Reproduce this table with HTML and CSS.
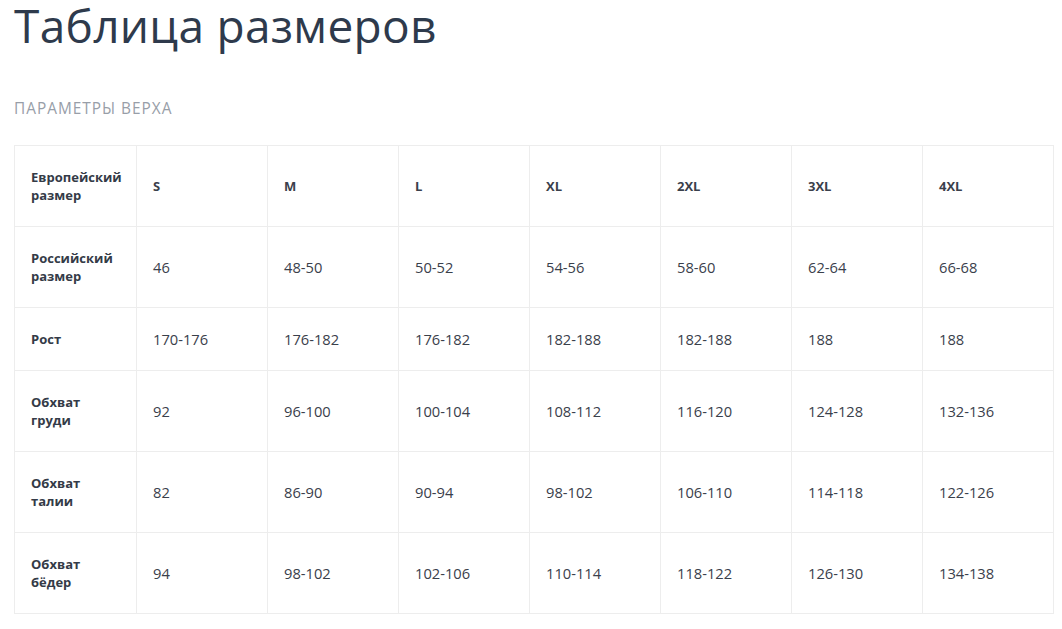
FILE: index.html
```html
<!DOCTYPE html>
<html lang="ru">
<head>
<meta charset="utf-8">
<title>Таблица размеров</title>
<link rel="stylesheet" href="styles.css">
</head>
<body>
<div class="page">
  <h1 class="title">Таблица размеров</h1>
  <h2 class="subtitle">ПАРАМЕТРЫ ВЕРХА</h2>
  <table class="sizes">
    <colgroup>
      <col class="col-head">
      <col><col><col><col><col><col><col>
    </colgroup>
    <tbody>
      <tr class="tall">
        <th>Европейский размер</th>
        <td class="strong">S</td><td class="strong">M</td><td class="strong">L</td><td class="strong">XL</td><td class="strong">2XL</td><td class="strong">3XL</td><td class="strong">4XL</td>
      </tr>
      <tr class="tall">
        <th>Российский размер</th>
        <td>46</td><td>48-50</td><td>50-52</td><td>54-56</td><td>58-60</td><td>62-64</td><td>66-68</td>
      </tr>
      <tr>
        <th>Рост</th>
        <td>170-176</td><td>176-182</td><td>176-182</td><td>182-188</td><td>182-188</td><td>188</td><td>188</td>
      </tr>
      <tr class="tall">
        <th>Обхват груди</th>
        <td>92</td><td>96-100</td><td>100-104</td><td>108-112</td><td>116-120</td><td>124-128</td><td>132-136</td>
      </tr>
      <tr class="tall">
        <th>Обхват талии</th>
        <td>82</td><td>86-90</td><td>90-94</td><td>98-102</td><td>106-110</td><td>114-118</td><td>122-126</td>
      </tr>
      <tr class="tall">
        <th>Обхват бёдер</th>
        <td>94</td><td>98-102</td><td>102-106</td><td>110-114</td><td>118-122</td><td>126-130</td><td>134-138</td>
      </tr>
    </tbody>
  </table>
</div>
</body>
</html>
```

FILE: styles.css
```css
html, body {
  margin: 0;
  padding: 0;
  background: #ffffff;
}

body {
  font-family: "Open Sans", "Noto Sans", "DejaVu Sans", sans-serif;
  color: #343b47;
}

.page {
  padding: 0 8px 0 14px;
}

.title {
  margin: -6px 0 0 0;
  padding-top: 0;
  font-size: 46px;
  font-weight: 400;
  line-height: 63px;
  color: #2e3a4c;
  letter-spacing: 0.3px;
}

.subtitle {
  margin: 42px 0 0 0;
  font-size: 15.4px;
  font-weight: 400;
  line-height: 20px;
  color: #989ea8;
  letter-spacing: 1px;
}

.sizes {
  margin-top: 26px;
  border-collapse: collapse;
  table-layout: fixed;
  width: 1040px;
}

.col-head {
  width: 122px;
}

.sizes th,
.sizes td {
  border: 1px solid #ededed;
  text-align: left;
  vertical-align: middle;
  padding: 0 16px 0 16px;
  height: 62px;
}

.sizes tr.tall th,
.sizes tr.tall td {
  height: 80px;
}

.sizes th {
  font-size: 13px;
  font-weight: 700;
  line-height: 18.5px;
  color: #343b47;
}

.sizes td {
  font-size: 14.7px;
  font-weight: 400;
  line-height: 19px;
  color: #3a404b;
}

.sizes td.strong {
  font-size: 13px;
  font-weight: 700;
}
```
